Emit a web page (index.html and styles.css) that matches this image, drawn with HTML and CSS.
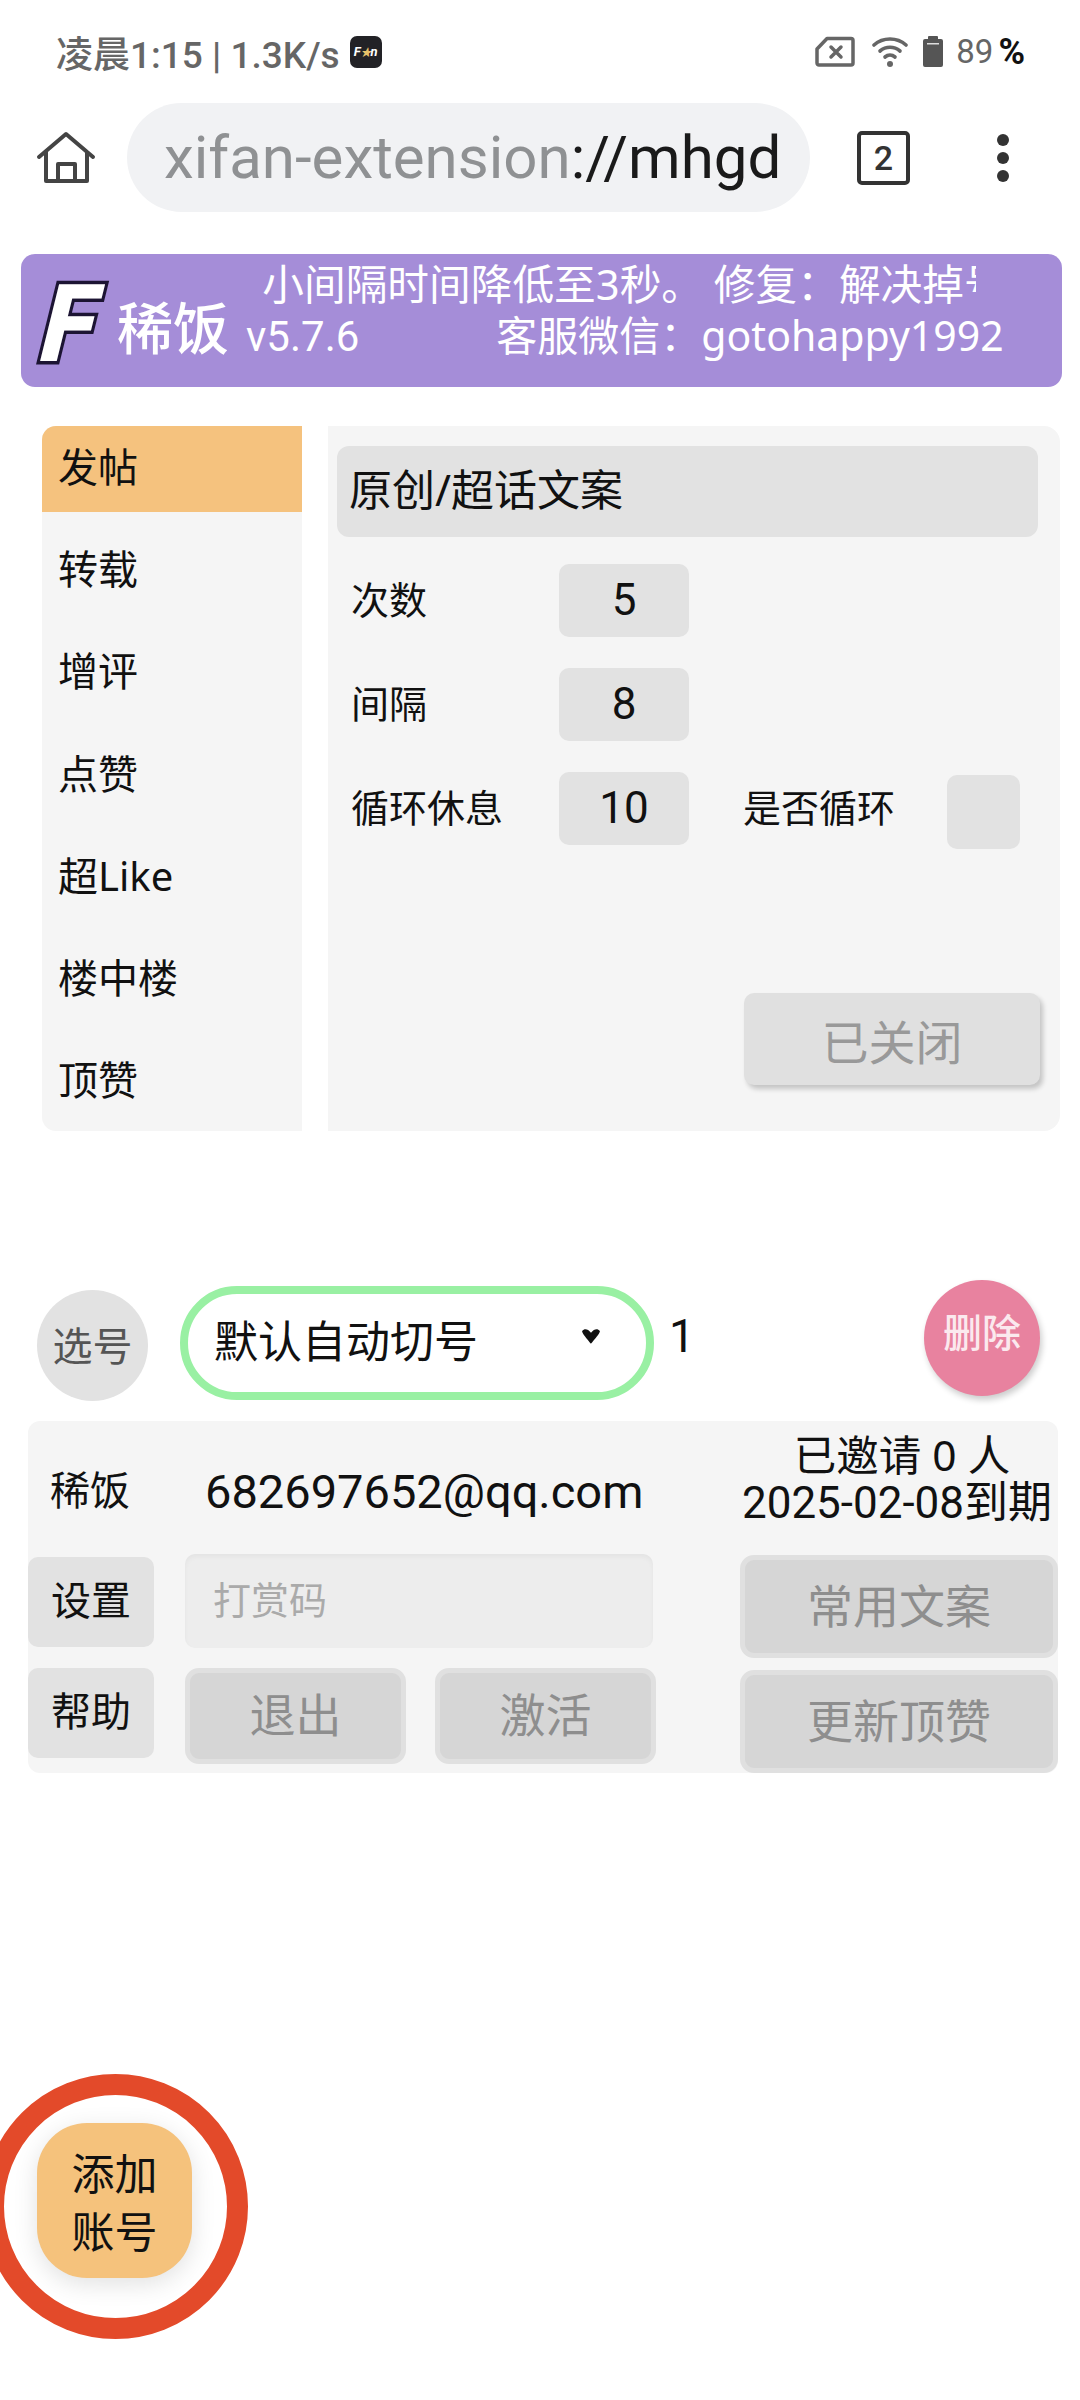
FILE: index.html
```html
<!DOCTYPE html>
<html lang="zh-CN">
<head>
  <meta charset="UTF-8" />
  <meta name="viewport" content="width=device-width, initial-scale=1" />
  <title>稀饭</title>
  <link rel="stylesheet" href="styles.css">
</head>
<body>
  <div class="status">
    <span class="status-time">凌晨1:15 | 1.3K/s</span>
    <span class="app-badge">F<i>★</i>n</span>
    <div class="status-right">
      <svg class="sim" width="40" height="31" viewBox="0 0 40 31">
        <path d="M12 2.500H36a2 2 0 0 1 2 2V27a2 2 0 0 1-2 2H4a2 2 0 0 1-2-2V13Z" fill="none" stroke="#666" stroke-width="3.500" stroke-linejoin="round"/>
        <path d="M16 11l10 10M26 11L16 21" stroke="#666" stroke-width="3.500" stroke-linecap="round"/>
      </svg>
      <svg class="wifi" width="36" height="32" viewBox="0 0 36 32">
        <path d="M2 9C11 1 25 1 34 9" fill="none" stroke="#666" stroke-width="3.600" stroke-linecap="round"/>
        <path d="M8 15C14 10 22 10 28 15" fill="none" stroke="#666" stroke-width="3.600" stroke-linecap="round"/>
        <path d="M13 21C16 18.500 20 18.500 23 21" fill="none" stroke="#666" stroke-width="3.600" stroke-linecap="round"/>
        <circle cx="18" cy="28" r="3" fill="#666"/>
      </svg>
      <svg class="battery" width="20" height="31" viewBox="0 0 20 31">
        <path d="M6 0h8a1 1 0 0 1 1 1v2h3a2 2 0 0 1 2 2v24a2 2 0 0 1-2 2H2a2 2 0 0 1-2-2V5a2 2 0 0 1 2-2h3V1a1 1 0 0 1 1-1Z" fill="#555"/>
        <rect x="4" y="7" width="12" height="1.500" fill="#ddd"/>
      </svg>
      <span class="batt-num">89</span>
      <span class="batt-pct">%</span>
    </div>
  </div>

  <div class="toolbar">
    <svg class="home" width="60" height="54" viewBox="0 0 60 54">
      <path d="M3 26L30 3L57 26M10 21V50H51V21M22 50V33H39V50" fill="none" stroke="#444" stroke-width="4" stroke-linejoin="round" stroke-linecap="round"/>
    </svg>
    <div class="url"><span class="url-host">xifan-extension</span>://mhgd</div>
    <div class="tabs">2</div>
    <div class="more"><span></span><span></span><span></span></div>
  </div>

  <header class="banner">
    <span class="logo-f">F</span>
    <span class="brand">稀饭</span>
    <span class="version">v5.7.6</span>
    <div class="notice">
      <div class="marquee">小间隔时间降低至3秒。 修复：解决掉号</div>
      <div class="wechat">客服微信：gotohappy1992</div>
    </div>
  </header>

  <main class="tabs-area">
    <nav class="side">
      <a class="side-item active">发帖</a>
      <a class="side-item">转载</a>
      <a class="side-item">增评</a>
      <a class="side-item">点赞</a>
      <a class="side-item">超Like</a>
      <a class="side-item">楼中楼</a>
      <a class="side-item">顶赞</a>
    </nav>
    <section class="panel">
      <div class="panel-title">原创/超话文案</div>
      <div class="field">
        <label>次数</label>
        <div class="num">5</div>
      </div>
      <div class="field">
        <label>间隔</label>
        <div class="num">8</div>
      </div>
      <div class="field">
        <label>循环休息</label>
        <div class="num">10</div>
        <label class="loop-label">是否循环</label>
        <div class="check"></div>
      </div>
      <button class="switch">已关闭</button>
    </section>
  </main>

  <div class="account-bar">
    <div class="pick">选号</div>
    <div class="select">
      <span>默认自动切号</span>
      <svg class="caret" width="22" height="18" viewBox="0 0 20 16">
        <path d="M2 3.500C4 1 7 1.500 10 5C13 1.500 16 1 18 3.500C19 5 10 15 10 15C10 15 1 5 2 3.500Z" fill="#111"/>
      </svg>
    </div>
    <div class="count">1</div>
    <div class="delete">删除</div>
  </div>

  <section class="card">
    <div class="card-left">
      <div class="info">
        <span class="info-name">稀饭</span>
        <span class="info-mail">682697652@qq.com</span>
      </div>
      <div class="row">
        <div class="tag">设置</div>
        <div class="code-input">打赏码</div>
      </div>
      <div class="row row-help">
        <div class="tag">帮助</div>
        <button class="btn btn-small">退出</button>
        <button class="btn btn-small">激活</button>
      </div>
    </div>
    <div class="card-right">
      <div class="invite">
        <div class="invite-count">已邀请 0 人</div>
        <div class="invite-date">2025-02-08到期</div>
      </div>
      <button class="btn btn-wide">常用文案</button>
      <button class="btn btn-wide">更新顶赞</button>
    </div>
  </section>

  <div class="fab">
    <div class="ring"></div>
    添加<br>账号
  </div>
</body>
</html>
```

FILE: styles.css
```css
* {
  box-sizing: border-box;
}

html,
body {
  margin: 0;
  padding: 0;
  background: #fff;
}

body {
  width: 1080px;
  height: 2400px;
  overflow: hidden;
  font-family: "Noto Sans", "Noto Sans CJK SC", sans-serif;
  color: #111;
}

button {
  font-family: inherit;
  cursor: pointer;
}

/* status bar */
.status {
  height: 103px;
  display: flex;
  align-items: center;
  padding: 0 55px 0 56px;
}

.status-time {
  font-family: Roboto, "Noto Sans CJK SC", sans-serif;
  font-size: 37px;
  font-weight: 500;
  color: #666;
  white-space: nowrap;
}

.app-badge {
  width: 32px;
  height: 32px;
  margin-left: 10px;
  border-radius: 7px;
  background: #222226;
  color: #fff;
  font-family: Roboto, sans-serif;
  font-size: 13px;
  font-weight: 700;
  font-style: italic;
  line-height: 32px;
  text-align: center;
  white-space: nowrap;
}

.app-badge i {
  color: #e8c26a;
  font-size: 10px;
}

.status-right {
  margin-left: auto;
  display: flex;
  align-items: center;
}

.wifi {
  margin-left: 17px;
}

.battery {
  margin-left: 15px;
}

.batt-num {
  margin-left: 13px;
  font-family: Roboto, sans-serif;
  font-size: 33px;
  color: #666;
}

.batt-pct {
  margin-left: 5px;
  font-family: Roboto, sans-serif;
  font-size: 36px;
  font-weight: 700;
  color: #111;
}

/* browser toolbar */
.toolbar {
  height: 109px;
  display: flex;
  align-items: center;
  padding-left: 36px;
}

.url {
  width: 683px;
  height: 109px;
  margin-left: 31px;
  padding-left: 37px;
  border-radius: 55px;
  background: #f1f2f4;
  font-family: Roboto, sans-serif;
  font-size: 60px;
  line-height: 109px;
  color: #1a1a1a;
  white-space: nowrap;
  overflow: hidden;
}

.url-host {
  color: #8f9193;
}

.tabs {
  width: 53px;
  height: 54px;
  margin-left: 47px;
  border: 4px solid #333;
  border-radius: 5px;
  font-family: Roboto, sans-serif;
  font-size: 34px;
  font-weight: 500;
  line-height: 46px;
  text-align: center;
  color: #333;
}

.more {
  width: 14px;
  height: 48px;
  margin-left: 87px;
  display: flex;
  flex-direction: column;
  justify-content: space-between;
}

.more span {
  width: 12px;
  height: 12px;
  border-radius: 50%;
  background: #333;
}

/* purple banner */
.banner {
  width: 1041px;
  height: 133px;
  margin: 42px 0 0 21px;
  border-radius: 14px;
  background: #a58dd8;
  color: #fff;
  display: flex;
  align-items: center;
}

.logo-f {
  width: 96px;
  padding-left: 20px;
  margin-top: 6px;
  font-family: Roboto, sans-serif;
  font-size: 108px;
  font-weight: 900;
  font-style: italic;
  line-height: 1;
  color: #fff;
  -webkit-text-stroke: 7px #1c1433;
  paint-order: stroke fill;
  transform: skewX(-5deg) scaleX(0.92);
}

.brand {
  font-size: 56px;
  font-weight: 500;
  margin-top: 8px;
  white-space: nowrap;
}

.version {
  margin: 31px 0 0 17px;
  font-family: Roboto, sans-serif;
  font-size: 42px;
  white-space: nowrap;
}

.notice {
  flex: 1;
  min-width: 0;
  height: 133px;
  display: flex;
  flex-direction: column;
  font-size: 41px;
}

.marquee {
  width: 714px;
  margin: 1px 0 0 -97px;
  font-size: 41.700px;
  overflow: hidden;
  white-space: nowrap;
  line-height: 58px;
}

.wechat {
  margin: -7px 0 0 137px;
  line-height: 58px;
  white-space: nowrap;
}

/* feature tabs */
.tabs-area {
  height: 705px;
  margin: 39px 0 0 42px;
  display: flex;
}

.side {
  width: 260px;
  background: #f5f5f5;
  border-radius: 14px 0 0 14px;
  overflow: hidden;
}

.side-item {
  display: block;
  height: 102.300px;
  padding: 0 16px;
  font-size: 40px;
  line-height: 82px;
  color: #111;
  white-space: nowrap;
}

.side-item.active {
  height: 86px;
  margin-bottom: 16px;
  background: #f5c27e;
}

.panel {
  position: relative;
  width: 732px;
  margin-left: 26px;
  padding: 20px 9px 0;
  background: #f5f5f5;
  border-radius: 0 16px 16px 0;
}

.panel-title {
  width: 701px;
  height: 91px;
  margin-bottom: 27px;
  padding-left: 12px;
  border-radius: 12px;
  background: #e2e2e2;
  font-size: 43px;
  line-height: 88px;
}

.field {
  height: 73px;
  margin-bottom: 31px;
  padding-left: 14px;
  display: flex;
  align-items: center;
  font-size: 38px;
}

.field label {
  width: 208px;
  margin-top: -6px;
  white-space: nowrap;
}

.num {
  width: 130px;
  height: 73px;
  border-radius: 10px;
  background: #e2e2e2;
  font-family: Roboto, sans-serif;
  font-size: 44px;
  line-height: 73px;
  text-align: center;
}

.field .loop-label {
  width: 204px;
  margin-left: 54px;
}

.check {
  width: 73px;
  height: 74px;
  margin-top: 6px;
  border-radius: 10px;
  background: #e2e2e2;
}

.switch {
  position: absolute;
  right: 20px;
  bottom: 46px;
  width: 296px;
  height: 92px;
  border: none;
  border-radius: 10px;
  background: #e0e0e0;
  box-shadow: 3px 4px 5px rgba(0, 0, 0, 0.2);
  font-size: 47px;
  color: #999;
}

/* account picker */
.account-bar {
  height: 141px;
  margin-top: 149px;
  padding: 0 38px 0 37px;
  display: flex;
  align-items: flex-start;
}

.pick {
  width: 111px;
  height: 111px;
  margin-top: 10px;
  border-radius: 50%;
  background: #e2e2e2;
  font-size: 40px;
  line-height: 111px;
  text-align: center;
  color: #555;
}

.select {
  width: 474px;
  height: 114px;
  margin: 6px 0 0 32px;
  padding: 0 44px 0 26px;
  border: 8px solid #99f0a3;
  border-radius: 57px;
  background: #fff;
  display: flex;
  align-items: center;
  justify-content: space-between;
  font-size: 44px;
}

.select span {
  margin-top: -8px;
  white-space: nowrap;
}

.caret {
  margin-top: -14px;
}

.count {
  margin: 29px 0 0 15px;
  font-family: Roboto, sans-serif;
  font-size: 46px;
}

.delete {
  width: 116px;
  height: 116px;
  margin: 0 2px 0 auto;
  border-radius: 50%;
  background: #e8829f;
  box-shadow: 2px 4px 6px rgba(0, 0, 0, 0.2);
  color: #fbe9ee;
  font-size: 39px;
  font-weight: 500;
  line-height: 104px;
  text-align: center;
}

/* account card */
.card {
  width: 1030px;
  height: 352px;
  margin-left: 28px;
  border-radius: 12px;
  background: #f5f5f5;
  display: flex;
}

.card-left {
  width: 712px;
}

.info {
  height: 133px;
  display: flex;
  align-items: center;
  white-space: nowrap;
}

.info-name {
  width: 177px;
  padding-left: 22px;
  font-size: 40px;
}

.info-mail {
  margin-top: 8px;
  font-family: Roboto, sans-serif;
  font-size: 47px;
}

.row {
  height: 114px;
  display: flex;
  align-items: flex-start;
}

.tag {
  width: 126px;
  height: 90px;
  margin-top: 3px;
  border-radius: 10px;
  background: #e2e2e2;
  font-size: 40px;
  line-height: 86px;
  text-align: center;
}

.code-input {
  width: 468px;
  height: 94px;
  margin-left: 31px;
  padding-left: 28px;
  border-radius: 10px;
  background: #ededed;
  box-shadow: inset 0 3px 5px rgba(0, 0, 0, 0.04);
  font-size: 38px;
  line-height: 90px;
  color: #aaa;
}

.btn {
  border: 5px solid #e0e0e0;
  border-radius: 14px;
  background: #d6d6d6;
  color: #8e8e8e;
  font-size: 46px;
  padding: 0 0 8px;
}

.row-help .tag {
  margin-top: 0;
}

.btn-small {
  width: 221px;
  height: 96px;
  margin-left: 31px;
}

.btn-small + .btn-small {
  margin-left: 29px;
}

.card-right {
  width: 318px;
}

.invite {
  height: 134px;
  padding-top: 10px;
  line-height: 48px;
  text-align: center;
  white-space: nowrap;
}

.invite-count {
  margin-left: 6px;
  font-size: 42.500px;
}

.invite-date {
  margin-left: -4px;
  font-family: Roboto, "Noto Sans CJK SC", sans-serif;
  font-size: 44px;
}

.btn-wide {
  display: block;
  width: 318px;
  height: 103px;
  margin-bottom: 12px;
}

/* floating add button */
.fab {
  position: relative;
  width: 155px;
  height: 155px;
  margin: 350px 0 0 37px;
  padding-top: 22px;
  border-radius: 50px;
  background: #f5c27c;
  box-shadow: 0 6px 24px rgba(0, 0, 0, 0.12);
  font-size: 43px;
  line-height: 58px;
  text-align: center;
  color: #111;
}

.ring {
  position: absolute;
  left: -54px;
  top: -49px;
  width: 265px;
  height: 265px;
  border: 21px solid #e34a2a;
  border-radius: 50%;
}
```
